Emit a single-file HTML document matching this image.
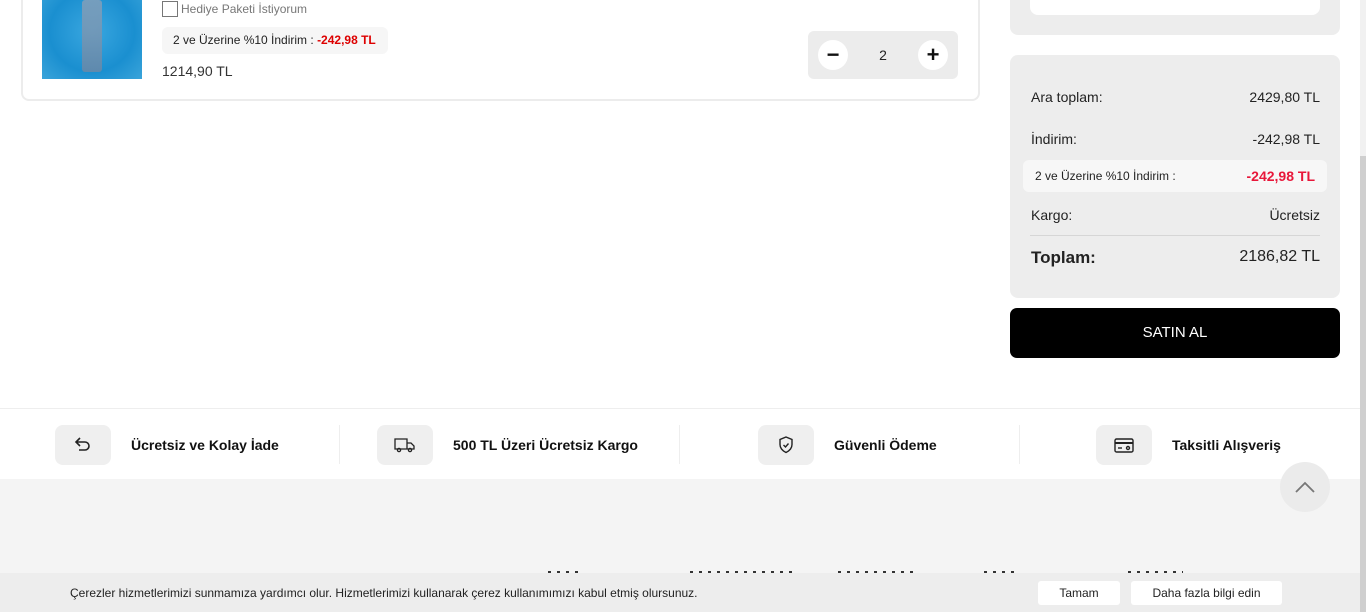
<!DOCTYPE html>
<html><head><meta charset="utf-8"><style>
*{box-sizing:border-box;margin:0;padding:0}
body{width:1366px;height:612px;overflow:hidden;background:#fff;font-family:"Liberation Sans",Arial,sans-serif;position:relative;color:#222}
.abs{position:absolute}
.card{left:21px;top:-10px;width:959px;height:111px;border:2px solid #ececec;border-top:none;border-radius:0 0 8px 8px}
.img{left:42px;top:0;width:100px;height:79px;background:radial-gradient(ellipse at 50% 40%,#3aa7e0,#1a8fd0 60%,#3aa4da)}
.cb{left:162px;top:1px;width:16px;height:16px;border:1px solid #777;background:#fff}
.t1{left:181px;top:2px;font-size:12px;color:#777}
.pill{left:162px;top:27px;width:226px;height:27px;background:#f6f6f6;border-radius:6px;font-size:12px;line-height:27px;padding-left:11px;color:#222}
.pill b{color:#d00}
.price{left:162px;top:63px;font-size:14px;color:#333}
.qty{left:808px;top:31px;width:150px;height:48px;background:#ececec;border-radius:6px}
.qb{position:absolute;top:9px;width:30px;height:30px;border-radius:50%;background:#fff;font-size:22px;font-weight:bold;text-align:center;line-height:29px;color:#111}
.box1{left:1010px;top:-10px;width:330px;height:45px;background:#ededed;border-radius:0 0 8px 8px}
.box1 div{position:absolute;left:20px;top:0;width:290px;height:25px;background:#fff;border-radius:0 0 8px 8px}
.sum{left:1010px;top:55px;width:330px;height:243px;background:#ededed;border-radius:8px}
.row{position:absolute;left:21px;right:20px;font-size:14px;color:#222;display:flex;justify-content:space-between}
.hl{position:absolute;left:13px;width:304px;top:105px;height:32px;background:#f7f7f7;border-radius:6px;font-size:12px;line-height:32px;padding:0 12px;display:flex;justify-content:space-between}
.hl b{color:#e8173a;font-size:14px}
.buy{left:1010px;top:308px;width:330px;height:50px;background:#000;border-radius:7px;color:#fff;text-align:center;line-height:50px;font-size:15px}
.feat{left:0;top:408px;width:1360px;height:71px;border-top:1px solid #eee;background:#fff}
.ic{position:absolute;top:16px;width:56px;height:40px;background:#efefef;border-radius:8px;display:flex;align-items:center;justify-content:center}
.ft{position:absolute;top:28px;font-size:14px;font-weight:bold;color:#111}
.sep{position:absolute;top:16px;width:1px;height:39px;background:#eee}
.foot{left:0;top:479px;width:1360px;height:133px;background:#f4f4f4}
.up{left:1280px;top:462px;width:50px;height:50px;border-radius:50%;background:#ebebeb}
.cookie{left:0;top:573px;width:1360px;height:39px;background:#ededed;font-size:12px}
.btn{position:absolute;top:8px;height:24px;background:#fff;border-radius:3px;text-align:center;line-height:24px;font-size:12px}
.sb{left:1360px;top:0;width:6px;height:612px;background:#f1f1f1}
.sbt{left:1360px;top:156px;width:6px;height:456px;background:#cfcfcf}
.dash{position:absolute;top:571px;height:2px;background:repeating-linear-gradient(90deg,#333 0 3px,transparent 3px 9px)}
</style></head><body>
<div class="abs card"></div>
<div class="abs img"><div style="position:absolute;left:40px;top:0;width:20px;height:72px;background:linear-gradient(#8aa0b8,#6f88a5);border-radius:3px;opacity:.8"></div></div>
<div class="abs cb"></div>
<div class="abs t1">Hediye Paketi İstiyorum</div>
<div class="abs pill">2 ve Üzerine %10 İndirim : <b>-242,98 TL</b></div>
<div class="abs price">1214,90 TL</div>
<div class="abs qty"><div class="qb" style="left:10px">−</div><div style="position:absolute;left:0;right:0;top:16px;text-align:center;font-size:14px">2</div><div class="qb" style="left:110px">+</div></div>

<div class="abs box1"><div></div></div>
<div class="abs sum">
<div class="row" style="top:34px"><span>Ara toplam:</span><span>2429,80 TL</span></div>
<div class="row" style="top:76px"><span>İndirim:</span><span>-242,98 TL</span></div>
<div class="hl"><span>2 ve Üzerine %10 İndirim :</span><b>-242,98 TL</b></div>
<div class="row" style="top:152px"><span>Kargo:</span><span>Ücretsiz</span></div>
<div style="position:absolute;left:20px;right:20px;top:180px;height:1px;background:#d6d6d6"></div>
<div class="row" style="top:193px;font-size:16px"><b style="font-size:17px">Toplam:</b><span>2186,82 TL</span></div>
</div>
<div class="abs buy">SATIN AL</div>

<div class="abs feat">
<div class="ic" style="left:55px"><svg width="20" height="20" viewBox="0 0 20 20" fill="none" stroke="#222" stroke-width="1.6"><path d="M7 3L3 7l4 4M3 7h9a4 4 0 010 8H6"/></svg></div>
<div class="ft" style="left:131px">Ücretsiz ve Kolay İade</div>
<div class="sep" style="left:339px"></div>
<div class="ic" style="left:377px"><svg width="24" height="20" viewBox="0 0 24 20" fill="none" stroke="#222" stroke-width="1.3"><path d="M2 4h12v10H2zM14 8h4l3 3v3h-7"/><circle cx="6" cy="15" r="1.6"/><circle cx="17" cy="15" r="1.6"/></svg></div>
<div class="ft" style="left:453px">500 TL Üzeri Ücretsiz Kargo</div>
<div class="sep" style="left:679px"></div>
<div class="ic" style="left:758px"><svg width="20" height="20" viewBox="0 0 20 20" fill="none" stroke="#222" stroke-width="1.4"><path d="M10 2l6 2.5v5c0 4-3 6.5-6 8-3-1.5-6-4-6-8v-5z"/><path d="M7.5 10l2 2 3-3.5"/></svg></div>
<div class="ft" style="left:834px">Güvenli Ödeme</div>
<div class="sep" style="left:1019px"></div>
<div class="ic" style="left:1096px"><svg width="22" height="20" viewBox="0 0 22 20" fill="none" stroke="#222" stroke-width="1.4"><rect x="2" y="4" width="18" height="13" rx="1.5"/><path d="M2 8h18" stroke-width="2"/><path d="M5 13h4"/><circle cx="15" cy="13" r="1.5"/></svg></div>
<div class="ft" style="left:1172px">Taksitli Alışveriş</div>
</div>
<div class="abs foot"></div>
<div class="dash" style="left:548px;width:30px"></div><div class="dash" style="left:690px;width:105px"></div><div class="dash" style="left:838px;width:80px"></div><div class="dash" style="left:984px;width:30px"></div><div class="dash" style="left:1128px;width:55px"></div>
<div class="abs up"><svg width="50" height="50" viewBox="0 0 50 50" fill="none" stroke="#777" stroke-width="1.8"><path d="M16 30l9-9 9 9"/></svg></div>
<div class="abs cookie">
<div style="position:absolute;left:70px;top:13px;color:#222">Çerezler hizmetlerimizi sunmamıza yardımcı olur. Hizmetlerimizi kullanarak çerez kullanımımızı kabul etmiş olursunuz.</div>
<div class="btn" style="left:1038px;width:82px">Tamam</div>
<div class="btn" style="left:1131px;width:151px">Daha fazla bilgi edin</div>
</div>
<div class="abs sb"></div><div class="abs sbt"></div>
</body></html>
